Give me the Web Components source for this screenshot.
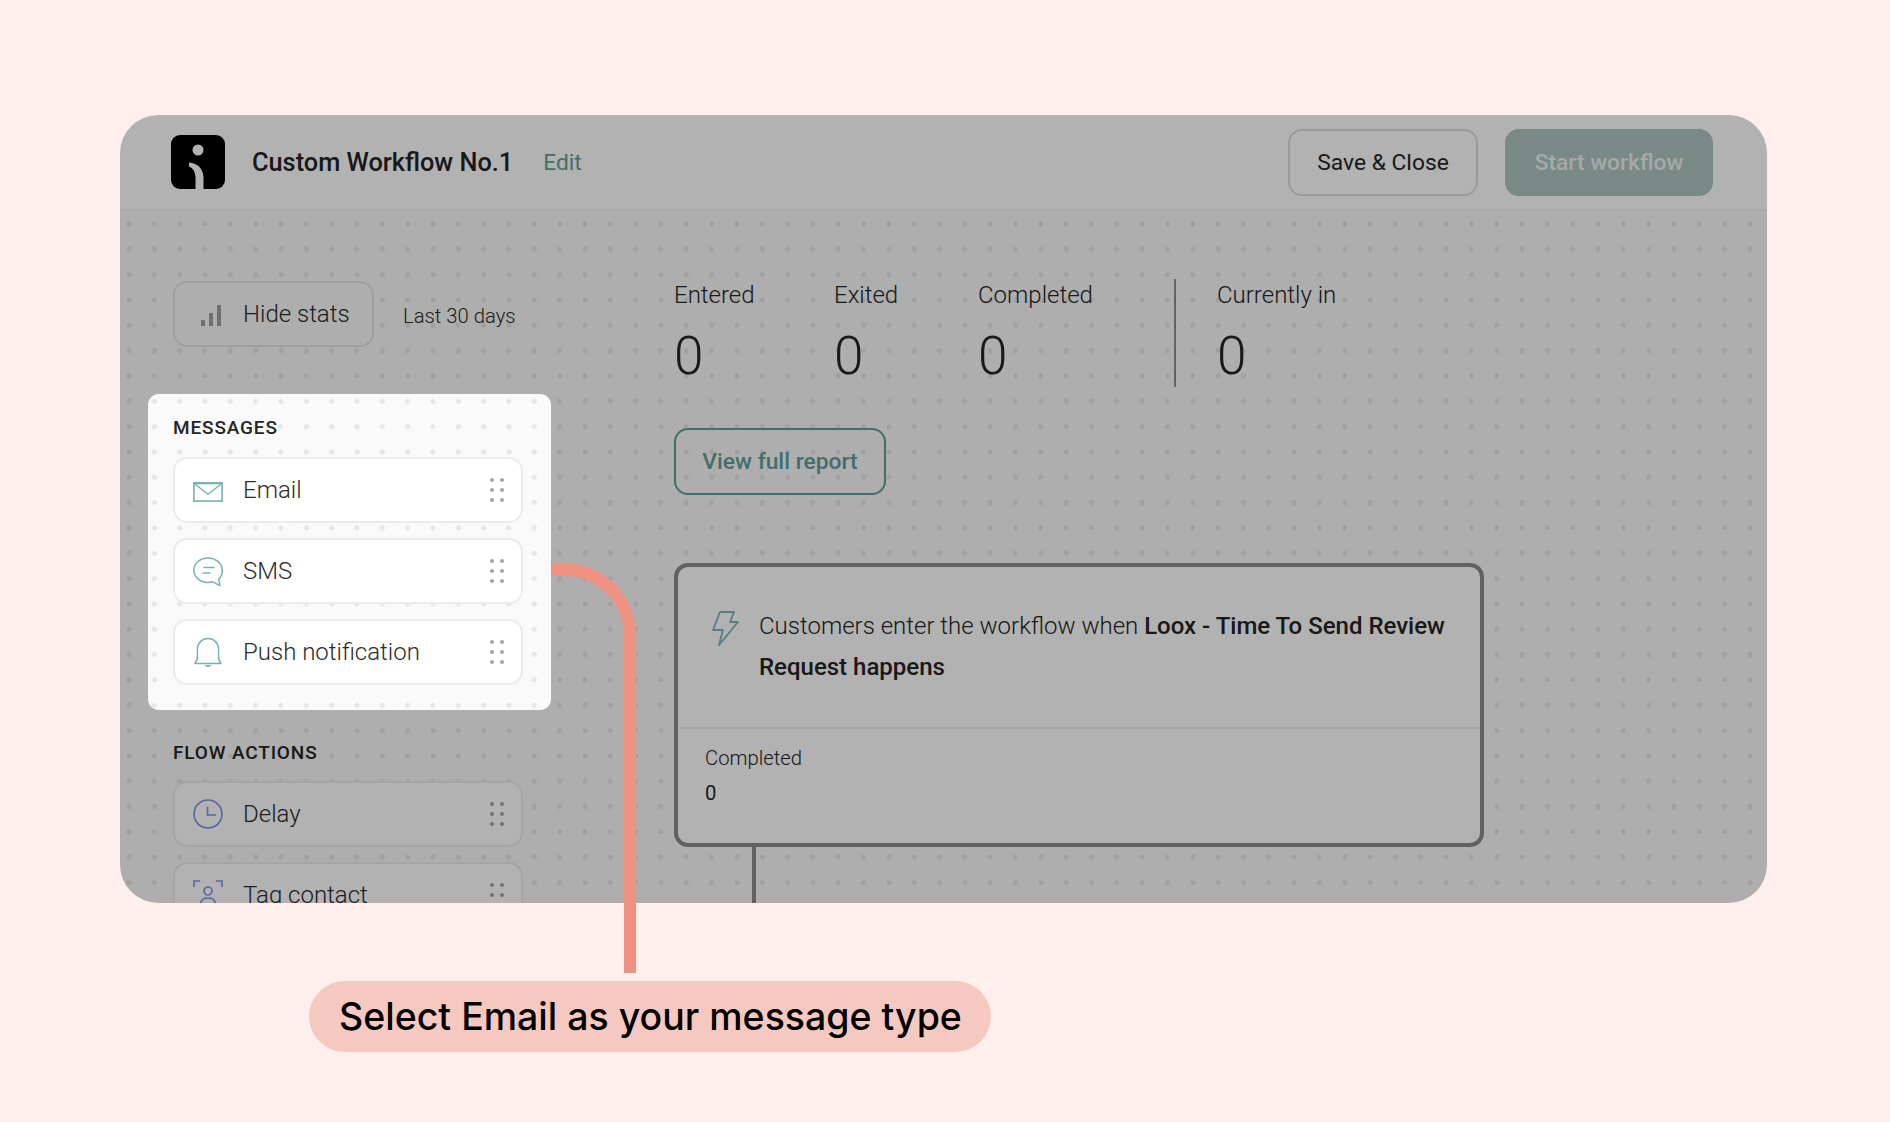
<!DOCTYPE html>
<html lang="en">
<head>
<meta charset="utf-8">
<title>Custom Workflow</title>
<style>
html,body{margin:0;padding:0;background:#feefed;font-family:Roboto,"Liberation Sans",sans-serif;}
</style>
</head>
<body>
<tour-page>
  <wf-window>
    <wf-header slot="header" title-text="Custom Workflow No.1"></wf-header>
    <wf-sidebar slot="side">
      <wf-section label="MESSAGES" first>
        <wf-action text="Email" icon="email"></wf-action>
        <wf-action text="SMS" icon="sms"></wf-action>
        <wf-action text="Push notification" icon="bell"></wf-action>
      </wf-section>
      <wf-section label="FLOW ACTIONS">
        <wf-action text="Delay" icon="clock"></wf-action>
        <wf-action text="Tag contact" icon="tag"></wf-action>
      </wf-section>
    </wf-sidebar>
    <wf-main slot="main"></wf-main>
  </wf-window>
  <tour-callout>Select Email as your message type</tour-callout>
</tour-page>
<script>
const ICONS={
 email:'<rect x="0.9" y="7.9" width="28.2" height="18.2" fill="none" stroke="#76b3b5" stroke-width="1.6"/><path d="M1 8.4 15 19.2 29 8.4" fill="none" stroke="#76b3b5" stroke-width="1.4"/><path d="M1 8.2H29" stroke="#76b3b5" stroke-width="2.2"/>',
 sms:'<path d="M15 2C7.2 2 .9 7.4.9 14.2S7.2 26.4 15 26.4c1.800 0 3.300-.2 4.700-.6l7.200 3.800-1.200-6.400c2.500-2.200 3.600-5.100 3.600-8.500C29.300 7.400 22.800 2 15 2Z" fill="none" stroke="#76b3b5" stroke-width="1.500" stroke-linejoin="round"/><path d="M11 11.500H21M10 17H17" stroke="#76b3b5" stroke-width="1.500" fill="none" stroke-linecap="round"/>',
 bell:'<path d="M2 26.500c0-1 2.400-2.500 2.400-6.500v-7.500C4.400 6.200 9 1.500 15 1.500s10.600 4.700 10.600 11V20c0 4 2.400 5.500 2.400 6.500Z" fill="none" stroke="#76b3b5" stroke-width="1.500" stroke-linejoin="round"/><path d="M11 28h8l-4 2.400Z" fill="#76b3b5"/>',
 clock:'<circle cx="15" cy="15" r="14" fill="none" stroke="#7f95f0" stroke-width="1.700"/><path d="M14.500 7.500V16H23" fill="none" stroke="#7f95f0" stroke-width="1.700"/>',
 tag:'<path d="M1 7V1H7M23 1H29V7M1 23V29H7M23 29H29V23" fill="none" stroke="#7f95f0" stroke-width="1.700"/><circle cx="15" cy="11" r="4" fill="none" stroke="#7f95f0" stroke-width="1.700"/><path d="M7.500 25c0-4.500 3-7 7.500-7s7.500 2.500 7.500 7Z" fill="none" stroke="#7f95f0" stroke-width="1.700"/>'
};
function def(name,css,html,init){
  customElements.define(name,class extends HTMLElement{
    connectedCallback(){
      if(this.shadowRoot)return;
      const r=this.attachShadow({mode:'open'});
      r.innerHTML='<style>'+css+'</style>'+(typeof html==='function'?html(this):html);
      if(init)init(this,r);
    }
  });
}
def('tour-page',`
 :host{display:flex;flex-direction:column;align-items:flex-start;box-sizing:border-box;width:1890px;height:1122px;padding:115px 0 0 120px;position:relative;overflow:hidden;}
 .arc{position:absolute;left:551px;top:563px;width:85px;height:410px;box-sizing:border-box;border-top:13px solid #f09281;border-right:12px solid #f09281;border-top-right-radius:72px;}
`,`<slot></slot><div class="arc"></div>`);
def('wf-window',`
 :host{display:block;width:1647px;height:788px;border-radius:38px;overflow:hidden;position:relative;background:#fff;flex:none;}
 .canvas{display:flex;height:692px;background-color:#fafafa;background-image:radial-gradient(circle at center,#e6e6e6 0,#e6e6e6 2.300px,transparent 2.900px);background-size:25.333px 25.333px;background-position:-3.670px .330px;}
 .mask{position:absolute;left:28px;top:279px;width:403px;height:316px;border-radius:11px;box-shadow:0 0 0 3000px rgba(0,0,0,.3);pointer-events:none;}
`,`<slot name="header"></slot><div class="canvas"><slot name="side"></slot><slot name="main"></slot></div><div class="mask"></div>`);
def('wf-button',`
 :host{display:inline-flex;align-items:center;justify-content:center;box-sizing:border-box;height:67px;border-radius:14px;border:2px solid #dfdfdf;background:transparent;color:#252525;font:400 22.800px Roboto,sans-serif;white-space:nowrap;flex:none;}
 :host([kind=primary]){background:#acc5c1;border-color:#acc5c1;color:#edf3f1;}
 :host([kind=outline]){border-color:#61a09a;color:#61a09a;font-weight:500;}
`,`<slot></slot>`);
def('wf-header',`
 :host{display:flex;align-items:center;box-sizing:border-box;height:96px;padding:0 54px 0 51px;background:#fff;border-bottom:2px solid #f1f1f1;}
 svg{width:54px;height:54px;flex:none;display:block;}
 h1{margin:0 0 0 27px;font:500 25.330px Roboto,sans-serif;color:#252525;white-space:nowrap;}
 .edit{margin-left:30px;font:400 22.800px Roboto,sans-serif;color:#61a09a;flex:1;}
 wf-button+wf-button{margin-left:27px;}
`,h=>`<svg viewBox="0 0 54 54"><rect width="54" height="54" rx="9" fill="#000"/><circle cx="27" cy="15" r="5.500" fill="#fff"/><path d="M18 27.500C26 28 32 33 32.500 42V54H24.500V43C24.500 37 22 33 18 31.500Z" fill="#fff"/></svg>
 <h1>${h.getAttribute('title-text')}</h1><span class="edit">Edit</span>
 <wf-button style="width:190px;">Save &amp; Close</wf-button><wf-button kind="primary" style="width:208px;font-weight:500;">Start workflow</wf-button>`);
def('wf-sidebar',`
 :host{display:block;box-sizing:border-box;width:554px;padding:70px 0 0 53px;flex:none;}
 .top{display:flex;align-items:center;}
 .hide{display:flex;align-items:center;box-sizing:border-box;width:201px;height:66px;border:2px solid #e4e4e4;border-radius:14px;padding-left:23px;font:300 24px Roboto,sans-serif;color:#2b2b2b;background:#fafafa;}
 svg{width:24px;height:24px;margin-right:21px;}
 .last{margin-left:29px;font:300 20.270px Roboto,sans-serif;color:#2b2b2b;padding-top:4px;}
`,`<div class="top"><div class="hide"><svg viewBox="0 0 24 24"><path d="M3 18h4v6H3zM11 11h4v13h-4zM19 3h4v21h-4z" fill="#a0a0a0"/></svg>Hide stats</div><span class="last">Last 30 days</span></div><slot></slot>`);
def('wf-section',`
 :host{display:block;width:350px;margin-top:56px;}
 :host([first]){margin-top:69px;}
 .l{font:500 19px/24px Roboto,sans-serif;letter-spacing:.85px;color:#252525;margin-bottom:17px;}
 :host(:not([first])) .l{margin-bottom:16px;}
 .list{display:flex;flex-direction:column;gap:15px;}
`,h=>`<div class="l">${h.getAttribute('label')}</div><div class="list"><slot></slot></div>`);
def('wf-action',`
 :host{display:flex;align-items:center;box-sizing:border-box;height:66px;background:#fff;border:2px solid #ececec;border-radius:14px;padding:0 17px 0 18px;font:300 24px Roboto,sans-serif;color:#2b2b2b;}
 svg.i{width:30px;height:30px;flex:none;margin-right:20px;}
 span{flex:1;}
 svg.d{width:14px;height:24px;flex:none;}
`,h=>`<svg class="i" viewBox="0 0 30 30">${ICONS[h.getAttribute('icon')]}</svg><span>${h.getAttribute('text')}</span>
 <svg class="d" viewBox="0 0 14 24" fill="#a3a3a3"><circle cx="2" cy="2" r="2"/><circle cx="12" cy="2" r="2"/><circle cx="2" cy="12" r="2"/><circle cx="12" cy="12" r="2"/><circle cx="2" cy="22" r="2"/><circle cx="12" cy="22" r="2"/></svg>`);
def('wf-stat',`
 :host{display:block;box-sizing:border-box;flex:none;color:#252525;}
 .a{font:300 24px/32px Roboto,sans-serif;}
 .b{font:300 53px/62px Roboto,sans-serif;margin-top:14px;}
`,h=>`<div class="a">${h.getAttribute('label')}</div><div class="b">${h.getAttribute('value')}</div>`);
def('wf-main',`
 :host{display:block;flex:1;padding-top:68px;}
 .stats{display:flex;height:108px;}
 .div{width:2px;background:#8f8f8f;margin-right:41px;flex:none;}
 wf-button{display:flex;width:212px;margin-top:41px;}
 wf-trigger{margin-top:68px;}
 .conn{width:4px;height:60px;margin-left:78px;background:#8c8c8c;}
`,`<div class="stats"><wf-stat label="Entered" value="0" style="width:160px"></wf-stat><wf-stat label="Exited" value="0" style="width:144px"></wf-stat><wf-stat label="Completed" value="0" style="width:196px"></wf-stat><div class="div"></div><wf-stat label="Currently in" value="0"></wf-stat></div>
 <wf-button kind="outline">View full report</wf-button><wf-trigger></wf-trigger><div class="conn"></div>`);
def('wf-trigger',`
 :host{display:block;box-sizing:border-box;width:810px;height:284px;background:#fff;border:4px solid #8c8c8c;border-radius:14px;color:#252525;}
 .t{display:flex;box-sizing:border-box;height:162px;padding:39px 30px 0 34px;border-bottom:2px solid #f0f0f0;}
 svg{width:27px;height:36px;flex:none;margin:5px 20px 0 0;}
 p{margin:0;font:300 24px/40.500px Roboto,sans-serif;}
 b{font-weight:500;}
 .c{padding:14px 0 0 27px;font:300 20.270px/30px Roboto,sans-serif;}
 .c div+div{font-weight:400;margin-top:5px;}
`,`<div class="t"><svg viewBox="0 0 27 36"><path d="M8 1H22L18 11H26L7 34 11 19H1Z" fill="none" stroke="#7fb3bf" stroke-width="1.800" stroke-linejoin="round"/></svg><p>Customers enter the workflow when <b>Loox - Time To Send Review Request happens</b></p></div><div class="c"><div>Completed</div><div>0</div></div>`);
def('tour-callout',`
 :host{display:inline-flex;align-items:center;box-sizing:border-box;height:71px;margin:78px 0 0 189px;padding:0 29px 0 30px;border-radius:36px;background:#f6c9c0;color:#000;font:500 37.500px Inter,sans-serif;white-space:nowrap;flex:none;}
`,`<slot></slot>`);
</script>
</body>
</html>
